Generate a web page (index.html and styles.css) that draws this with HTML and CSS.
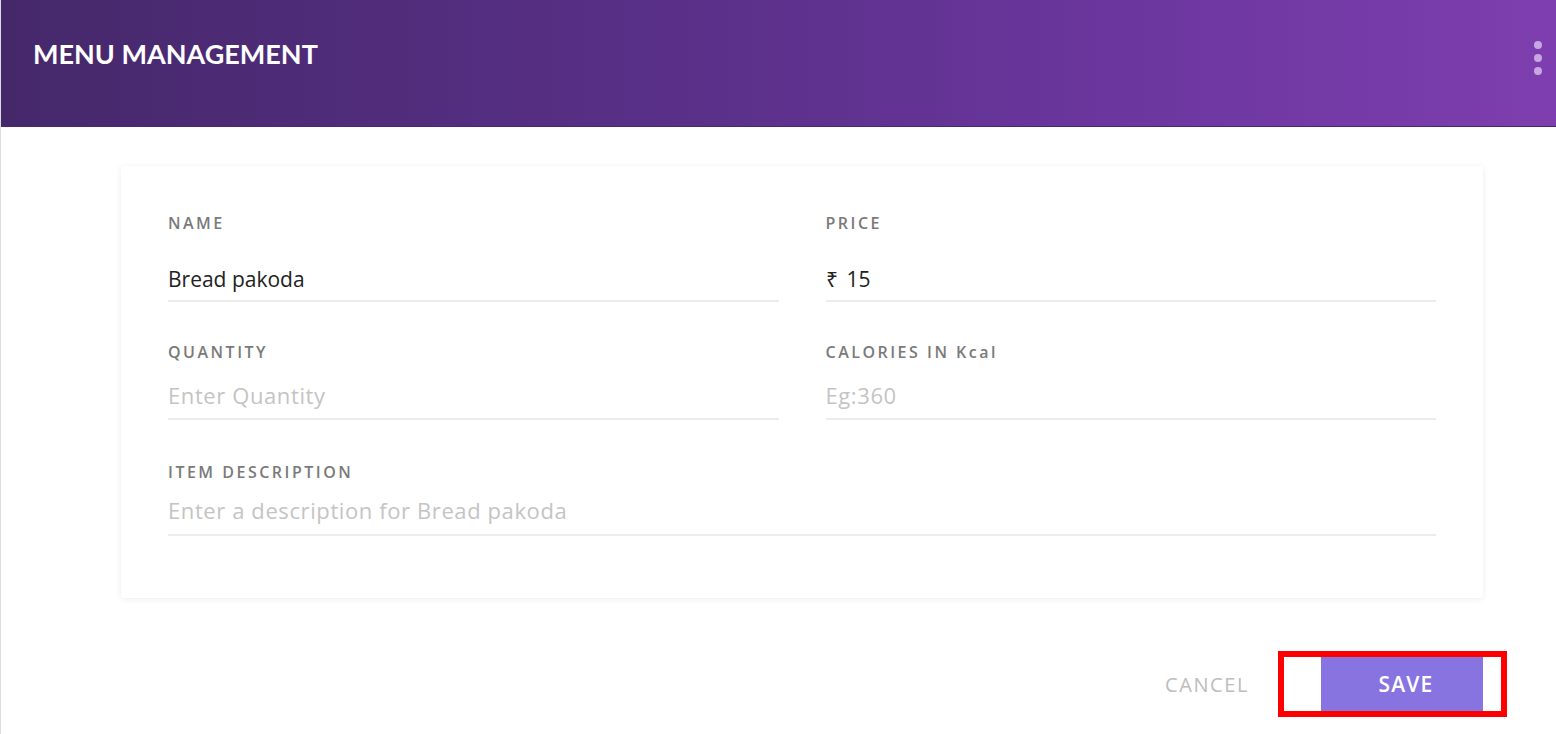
FILE: index.html
```html
<!DOCTYPE html>
<html lang="en">
<head>
<meta charset="utf-8">
<title>Menu Management</title>
<link rel="stylesheet" href="styles.css">
</head>
<body>
<div class="page">
  <header class="topbar">
    <h1 class="title">MENU MANAGEMENT</h1>
    <div class="kebab"><span></span><span></span><span></span></div>
  </header>
  <main class="content">
    <section class="card">
      <div class="grid">
        <div class="field row1">
          <label class="label">NAME</label>
          <div class="input value">Bread pakoda</div>
        </div>
        <div class="field row1">
          <label class="label">PRICE</label>
          <div class="input value"><span class="rupee">₹</span>15</div>
        </div>
        <div class="field row2">
          <label class="label">QUANTITY</label>
          <div class="input placeholder">Enter Quantity</div>
        </div>
        <div class="field row2">
          <label class="label">CALORIES IN Kcal</label>
          <div class="input placeholder">Eg:360</div>
        </div>
        <div class="field row3 wide">
          <label class="label">ITEM DESCRIPTION</label>
          <div class="input placeholder">Enter a description for Bread pakoda</div>
        </div>
      </div>
    </section>
    <div class="actions">
      <button class="btn cancel">CANCEL</button>
      <div class="save-wrap">
        <button class="btn save">SAVE</button>
        <div class="highlight"></div>
      </div>
    </div>
  </main>
</div>
</body>
</html>
```

FILE: styles.css
```css
html, body {
  margin: 0;
  padding: 0;
  background: #fff;
}
body {
  font-family: "Open Sans", "Liberation Sans", Arial, sans-serif;
  color: #222;
}
.page {
  border-left: 1px solid #dcdcdc;
  min-height: 734px;
  box-sizing: border-box;
}
.topbar {
  height: 126px;
  border-bottom: 1px solid #4b2677;
  background: linear-gradient(90deg, #45286a 0%, #5a3089 45%, #6d37a0 75%, #7e3eaf 100%);
  display: flex;
  align-items: center;
  justify-content: space-between;
  padding: 0 0 0 32px;
  box-sizing: content-box;
}
.title {
  margin: 0 0 19px 0;
  font-family: Lato, "Liberation Sans", Arial, sans-serif;
  color: #fff;
  font-size: 27px;
  font-weight: 700;
  letter-spacing: 0;
}
.kebab {
  display: flex;
  flex-direction: column;
  gap: 5px;
  margin-right: 14px;
  margin-bottom: 11px;
}
.kebab span {
  width: 8px;
  height: 8px;
  border-radius: 50%;
  background: #c7a7e2;
}
.content {
  padding: 39px 73px 0 120px;
}
.card {
  background: #fff;
  border-radius: 3px;
  box-shadow: 0 1px 6px rgba(0, 0, 0, 0.08);
  padding: 48px 47px 62px 47px;
}
.grid {
  display: grid;
  grid-template-columns: 1fr 1fr;
  column-gap: 47px;
}
.field.wide {
  grid-column: 1 / span 2;
}
.label {
  display: block;
  font-size: 16px;
  line-height: 18px;
  font-weight: 600;
  letter-spacing: 2.5px;
  color: #7a7a7a;
}
.input {
  border-bottom: 2px solid #ececec;
  font-size: 22px;
  line-height: 28px;
  letter-spacing: 0.6px;
}
.row1 .input {
  padding: 35px 0 9px 0;
}
.row2 {
  margin-top: 41px;
}
.row2 .input {
  padding: 20px 0 9px 0;
}
.row3 {
  margin-top: 43px;
}
.row3 .input {
  padding: 15px 0 10px 0;
}
.value {
  font-size: 21px;
  line-height: 24px;
  letter-spacing: 0;
  color: #222;
}
.rupee {
  margin-right: 9px;
}
.placeholder {
  color: #c4c4c4;
}
.actions {
  display: flex;
  justify-content: flex-end;
  align-items: center;
  margin-top: 53px;
}
.btn {
  font-family: "Open Sans", "Liberation Sans", Arial, sans-serif;
  border: none;
  cursor: pointer;
  font-size: 20px;
}
.cancel {
  background: transparent;
  color: #bdbdbd;
  padding: 0;
  margin-right: 72px;
  letter-spacing: 1.6px;
}
.save-wrap {
  position: relative;
}
.save {
  display: block;
  width: 162px;
  height: 66px;
  padding: 0 0 0 8px;
  background: #8874e0;
  color: #fff;
  font-size: 21px;
  font-weight: 600;
  letter-spacing: 1.2px;
  border-radius: 2px;
}
.highlight {
  position: absolute;
  left: -43px;
  right: -24px;
  top: 0;
  bottom: 0;
  border: 6px solid #ff0000;
}
```
